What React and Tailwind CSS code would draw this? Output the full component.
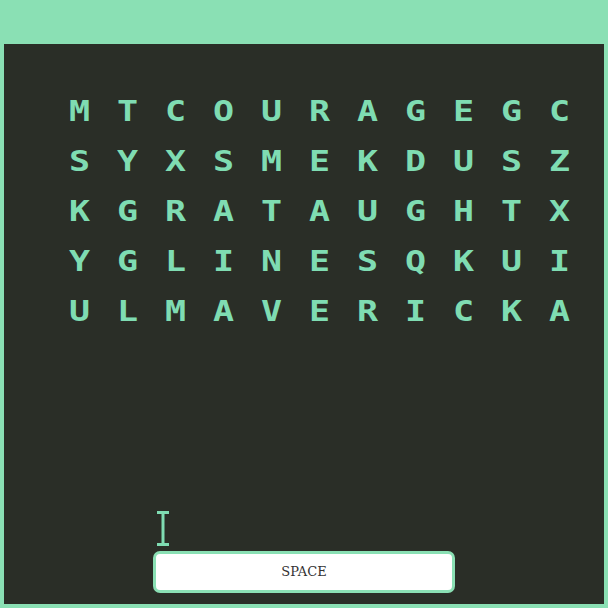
import React from 'react';

const ROWS = [
  'MTCOURAGEGC',
  'SYXSMEKDUSZ',
  'KGRATAUGHTX',
  'YGLINESQKUI',
  'ULMAVERICKA',
];

export default function App() {
  return (
    <div className="w-[608px] h-[608px] bg-[#8ae0b4] pt-[44px] px-[4px] pb-[4px]">
      <div className="relative h-full bg-[#2a2e27] flex flex-col">
        {/* letter grid */}
        <div className="pt-[43px] pl-[51px] flex flex-col">
          {ROWS.map((row, r) => (
            <div key={r} className="flex h-[50px] items-center">
              {row.split('').map((ch, c) => (
                <div key={c} className="w-[48px] flex justify-center">
                  <span
                    className="inline-block scale-x-125 text-[#7fdcb2] font-bold text-[28px] leading-none"
                    style={{ fontFamily: '"DejaVu Sans Mono", monospace' }}
                  >
                    {ch}
                  </span>
                </div>
              ))}
            </div>
          ))}
        </div>

        <div className="flex-1" />

        {/* text cursor */}
        <svg className="absolute left-[153px] top-[467px]" width="12" height="35" viewBox="0 0 12 35">
          <path d="M0 1.5h12M6 1.5v32M0 33.5h12" stroke="#7fdcb2" strokeWidth="3" fill="none" />
        </svg>

        <div className="flex justify-center pb-[11px]">
          <button
            type="button"
            className="w-[302px] h-[42px] bg-white border-[3px] border-[#8ae0b4] rounded-[7px] text-[13px] text-[#333333]"
            style={{ fontFamily: '"DejaVu Serif", serif' }}
          >
            SPACE
          </button>
        </div>
      </div>
    </div>
  );
}
